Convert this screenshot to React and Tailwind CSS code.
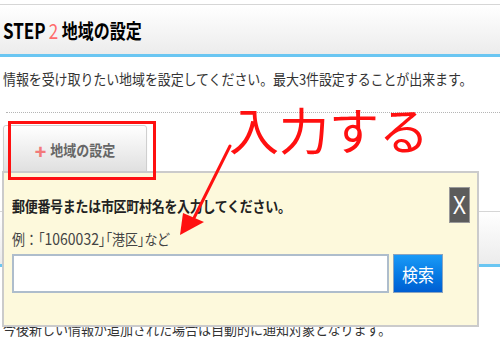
import React from "react";

const jp = "font-['Noto_Sans_CJK_JP','Noto_Sans_CJK_SC',sans-serif]";

const SettingsPage = () => {
  return (
    <div className={`relative w-[500px] h-[350px] overflow-hidden bg-white text-[#333] ${jp}`}>
      <div className="pt-1">
        {/* STEP2 header */}
        <div className="h-[53px] border-t border-[#d6d6d6] border-b-[3px] border-b-[#6ac6f2] bg-linear-to-b from-white to-[#ececec] flex items-center pl-[3px]">
          <h2 className="inline-block scale-y-125 origin-left text-[16px] font-bold text-black leading-none">
            <span className="text-[17px]">STEP</span>
            <span className="text-[#ff6b6b] text-[17px] font-normal ml-[3px]">2</span> 地域の設定
          </h2>
        </div>

        <p className="mt-3 pl-[3px] text-[13px] leading-5 tracking-[-0.1px] whitespace-nowrap scale-y-110 origin-left">
          情報を受け取りたい地域を設定してください。最大3件設定することが出来ます。
        </p>

        <div className="mt-[23px] ml-[6px] border-t border-dotted border-[#b5b5b5]" />

        {/* add area button */}
        <div className="mt-3 ml-[3px]">
          <button className="w-[144px] h-[50px] rounded-[3px] border border-[#cfcfcf] bg-linear-to-b from-white to-[#dedede] shadow-[0_1px_1px_rgba(0,0,0,0.15)] flex items-center justify-center gap-1 text-[13px] font-bold text-[#666]">
            <span className="text-[#f27a7a] text-[19px] leading-none font-black">+</span>
            <span className="inline-block scale-y-115">地域の設定</span>
          </button>
        </div>

        {/* next step header, mostly hidden behind the popup */}
        <div className="mt-[36px] h-[56px] border-t border-[#d6d6d6] border-b-[3px] border-b-[#6ac6f2] bg-linear-to-b from-white to-[#ececec]" />

        <p className="mt-[52px] pl-[3px] text-[13px] leading-5 whitespace-nowrap scale-y-110">
          今後新しい情報が追加された場合は自動的に通知対象となります。
        </p>
      </div>

      {/* popup */}
      <div className="absolute left-[2px] top-[171px] w-[477px] h-[156px] border-2 border-[#cbcbcb] bg-[#fdf9dc] pl-2 pt-[23px]">
        <p className="text-[13px] leading-5 font-bold text-[#222] tracking-[-0.3px] scale-y-110 origin-left">
          郵便番号または市区町村名を入力してください。
        </p>
        <p className="mt-3 text-[13px] leading-5 text-[#444] scale-y-110 origin-left">
          例：<span className="[font-feature-settings:'palt']">「<span className="text-[14px]">1060032</span>」「港区」など</span>
        </p>
        <div className="mt-[5px] flex gap-1">
          <input
            type="text"
            className="w-[377px] h-[39px] border-2 border-[#aebdcc] bg-white outline-none"
          />
          <button className="w-[50px] h-[39px] border border-[#8aa4c0] bg-linear-to-b from-[#1a9af7] to-[#005ed2] text-white text-[16px] leading-none">
            <span className="inline-block scale-y-115">検索</span>
          </button>
        </div>
        <button className="absolute top-[14px] right-[7px] w-[21px] h-[36px] bg-[#5c5c5c] border border-[#9a9a9a] text-white text-[20px] leading-none flex items-center justify-center font-['Liberation_Sans',sans-serif]">
          <span className="inline-block scale-y-125">X</span>
        </button>
      </div>

      {/* annotations */}
      <div className="absolute left-[8px] top-[121px] w-[148px] h-[59px] border-[3px] border-[#ff1010]" />
      <div className="absolute left-[229px] top-[103px] text-[50px] leading-none text-[#ff1010] whitespace-nowrap">
        入力する
      </div>
      <svg className="absolute left-0 top-0" width="500" height="350" viewBox="0 0 500 350">
        <line x1="230" y1="146" x2="194" y2="218" stroke="#ff1010" strokeWidth="3" strokeLinecap="round" />
        <polygon points="180,235 183,213 204,222" fill="#ff1010" />
      </svg>
    </div>
  );
};

export default function App() {
  return <SettingsPage />;
}
